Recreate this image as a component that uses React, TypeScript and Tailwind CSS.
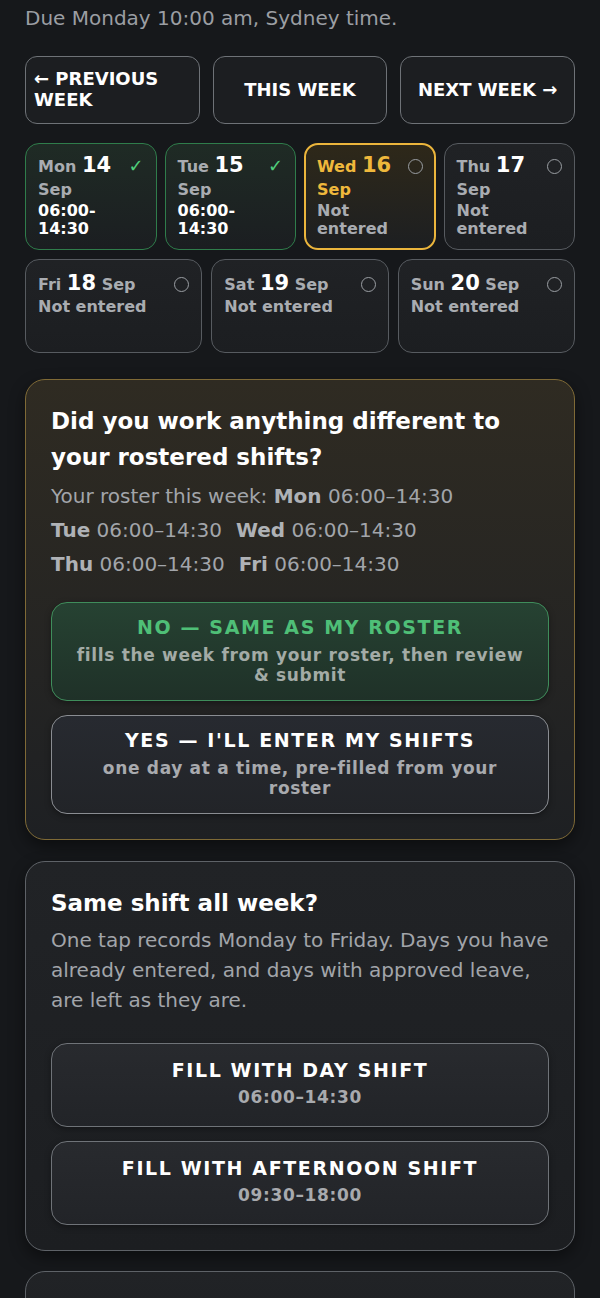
import React from "react";

type DayStatus = "done" | "current" | "todo";

type Day = {
  dow: string;
  date: number;
  month: string;
  status: DayStatus;
  time?: string;
};

const WEEK_TOP: Day[] = [
  { dow: "Mon", date: 14, month: "Sep", status: "done", time: "06:00-14:30" },
  { dow: "Tue", date: 15, month: "Sep", status: "done", time: "06:00-14:30" },
  { dow: "Wed", date: 16, month: "Sep", status: "current" },
  { dow: "Thu", date: 17, month: "Sep", status: "todo" },
];

const WEEK_BOTTOM: Day[] = [
  { dow: "Fri", date: 18, month: "Sep", status: "todo" },
  { dow: "Sat", date: 19, month: "Sep", status: "todo" },
  { dow: "Sun", date: 20, month: "Sep", status: "todo" },
];

const ROSTER = [
  { day: "Mon", time: "06:00–14:30" },
  { day: "Tue", time: "06:00–14:30" },
  { day: "Wed", time: "06:00–14:30" },
  { day: "Thu", time: "06:00–14:30" },
  { day: "Fri", time: "06:00–14:30" },
];

function DayCard({ day, wide = false }: { day: Day; wide?: boolean }) {
  const cardClass =
    day.status === "done"
      ? "border border-[#2f7d4b] bg-gradient-to-b from-[#1f2b25] to-[#1b1e21] px-3"
      : day.status === "current"
        ? "border-2 border-[#ebb53c] bg-gradient-to-b from-[#2e2819] to-[#1d1f21] px-[11px]"
        : "border border-[#575b60] bg-gradient-to-b from-[#202225] to-[#1c1e21] px-3";
  const padTop = day.status === "current" ? "pt-[9px]" : wide ? "pt-3" : "pt-2.5";
  const labelColor = day.status === "current" ? "text-[#efb83c]" : "text-[#a9acb1]";
  const numColor = day.status === "current" ? "text-[#efb83c]" : "text-white";
  const statusGap = wide ? "mt-0.5" : "mt-px";

  return (
    <div className={`min-h-[94px] rounded-[14px] pb-2.5 ${padTop} ${cardClass}`}>
      <div className="flex items-start justify-between gap-1">
        <p className={`text-[16px] font-bold leading-[23px] ${labelColor}`}>
          {day.dow} <span className={`text-[21px] ${numColor}`}>{day.date}</span> {day.month}
        </p>
        {day.status === "done" ? (
          <span className="mt-[3px] text-[18px] leading-none text-[#4fcf7c]">✓</span>
        ) : (
          <span className="mt-[5px] block h-[15px] w-[15px] shrink-0 rounded-full border-[1.5px] border-[#9a9ea3]" />
        )}
      </div>
      {day.time ? (
        <p className={`${statusGap} text-[16px] font-bold leading-[18px] text-white`}>{day.time}</p>
      ) : (
        <p className={`${statusGap} text-[16px] font-bold leading-[18px] text-[#a9acb1]`}>Not entered</p>
      )}
    </div>
  );
}

function BigButton({
  title,
  sub,
  variant = "plain",
  compact = false,
}: {
  title: string;
  sub: string;
  variant?: "green" | "plain";
  compact?: boolean;
}) {
  const tone =
    variant === "green"
      ? "border-[#3f8d5b] bg-gradient-to-b from-[#264232] to-[#1f3128]"
      : compact
        ? "border-[#6f7378] bg-gradient-to-b from-[#282a2e] to-[#222428]"
        : "border-[#8a8d92] bg-gradient-to-b from-[#272a30] to-[#222428]";
  return (
    <button
      className={`w-full rounded-[16px] border px-[22px] text-center shadow-[0_2px_6px_rgba(0,0,0,0.35)] ${
        compact ? "pt-[14px] pb-[19px]" : "pt-3 pb-[15px]"
      } ${tone}`}
    >
      <div
        className={`text-[19px] font-bold uppercase leading-6 tracking-[0.085em] ${
          variant === "green" ? "text-[#4fbf77]" : "text-white"
        }`}
      >
        {title}
      </div>
      <div
        className={`text-[17px] font-bold leading-5 tracking-[0.04em] ${compact ? "mt-[5px]" : "mt-1.5"} ${
          variant === "green" ? "text-[#a3aba6]" : "text-[#a8aaae]"
        }`}
      >
        {sub}
      </div>
    </button>
  );
}

export default function App() {
  return (
    <div className="min-h-screen bg-[#16181b] px-[25px] pt-[3px] pb-10 font-['DejaVu_Sans','Liberation_Sans',sans-serif]">
      <p className="text-[20px] leading-[30px] text-[#9b9ea3]">Due Monday 10:00 am, Sydney time.</p>

      {/* Week navigation */}
      <div className="mt-[23px] grid grid-cols-3 gap-[13px]">
        <button className="h-[68px] rounded-[12px] border border-[#6e7277] bg-[#1c1e21] px-2 pb-0.5 text-left text-[18px] font-bold leading-[21px] text-white">
          ← PREVIOUS WEEK
        </button>
        <button className="h-[68px] rounded-[12px] border border-[#6e7277] bg-[#1c1e21] px-2 pb-0.5 text-center text-[18px] font-bold leading-[21px] text-white">
          THIS WEEK
        </button>
        <button className="h-[68px] rounded-[12px] border border-[#6e7277] bg-[#1c1e21] px-2 pb-0.5 text-center text-[18px] font-bold leading-[21px] text-white">
          NEXT WEEK →
        </button>
      </div>

      {/* Days */}
      <div className="mt-[19px] grid grid-cols-4 gap-2">
        {WEEK_TOP.map((d) => (
          <DayCard key={d.dow} day={d} />
        ))}
      </div>
      <div className="mt-[9px] grid grid-cols-3 gap-[9px]">
        {WEEK_BOTTOM.map((d) => (
          <DayCard key={d.dow} day={d} wide />
        ))}
      </div>

      {/* Roster question */}
      <section className="mt-[26px] rounded-[20px] border border-[#7f6a36] bg-gradient-to-b from-[#2f2b22] to-[#1e2023] px-[25px] pt-[23px] pb-[25px] shadow-[0_6px_16px_rgba(0,0,0,0.45)]">
        <h2 className="text-[23px] font-bold leading-[36px] text-white">
          Did you work anything different to your rostered shifts?
        </h2>
        <p className="mt-1 text-[20px] leading-[34px] text-[#a2a5aa]">
          Your roster this week:{" "}
          {ROSTER.map((r) => (
            <span key={r.day} className="mr-[14px] inline-block whitespace-nowrap">
              <b className="font-bold text-[#afb2b6]">{r.day}</b> {r.time}
            </span>
          ))}
        </p>
        <div className="mt-[21px] flex flex-col gap-3.5">
          <BigButton
            variant="green"
            title="No — same as my roster"
            sub="fills the week from your roster, then review & submit"
          />
          <BigButton title="Yes — I'll enter my shifts" sub="one day at a time, pre-filled from your roster" />
        </div>
      </section>

      {/* Same shift all week */}
      <section className="mt-[21px] rounded-[20px] border border-[#5e6267] bg-gradient-to-b from-[#212326] to-[#1c1e21] px-[25px] pt-[23px] pb-[25px] shadow-[0_6px_16px_rgba(0,0,0,0.45)]">
        <h2 className="text-[23px] font-bold leading-[36px] text-white">Same shift all week?</h2>
        <p className="mt-1 text-[20px] leading-[30px] text-[#a2a5aa]">
          One tap records Monday to Friday. Days you have already entered, and days with approved leave, are left as
          they are.
        </p>
        <div className="mt-7 flex flex-col gap-3.5">
          <BigButton compact title="Fill with day shift" sub="06:00–14:30" />
          <BigButton compact title="Fill with afternoon shift" sub="09:30–18:00" />
        </div>
      </section>

      <section className="mt-5 min-h-[140px] rounded-[20px] border border-[#5e6267] bg-gradient-to-b from-[#212326] to-[#1c1e21]" />
    </div>
  );
}
